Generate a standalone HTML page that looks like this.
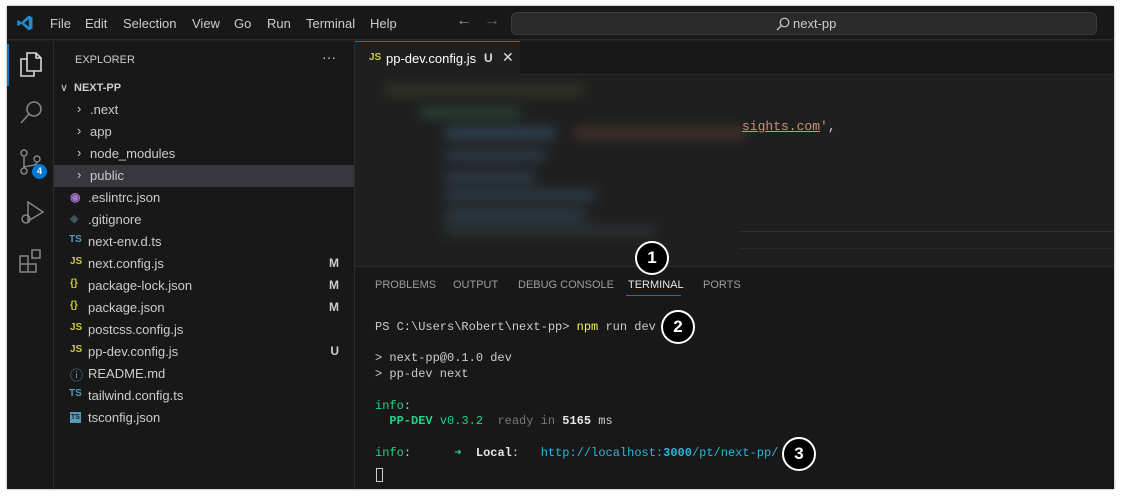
<!DOCTYPE html>
<html><head><meta charset="utf-8"><style>
*{margin:0;padding:0;box-sizing:border-box}
body{width:1121px;height:497px;background:#fff;position:relative;overflow:hidden;font-family:"Liberation Sans",sans-serif;font-size:13px;color:#ccc}
.win{position:absolute;left:7px;top:6px;width:1107px;height:483px;background:#1f1f1f;box-shadow:0 0 2px #888}
.abs{position:absolute}
.title{left:0;top:0;width:1107px;height:34px;background:#181818;border-bottom:1px solid #2b2b2b}
.menu span{position:absolute;top:10px;font-size:13px;color:#ccc}
.act{left:0;top:35px;width:47px;height:448px;background:#181818;border-right:1px solid #2b2b2b}
.side{left:47px;top:35px;width:301px;height:448px;background:#181818;border-right:1px solid #2b2b2b}
.row{position:absolute;left:0;width:300px;height:22px;font-size:13px;color:#ccc}
.row .t{position:absolute;left:34px;top:3px}
.row .ic{position:absolute;left:16px;top:3px;font-size:10px;font-weight:bold}
.row .m{position:absolute;right:15px;top:3px;color:#ccc;font-weight:bold;font-size:12px}
.mono{font-family:"Liberation Mono",monospace;font-size:12px}
.circ{position:absolute;width:34px;height:34px;border-radius:50%;background:#000;border:2.5px solid #fff;color:#fff;font-size:17px;text-align:center;line-height:29px;font-weight:bold}
</style></head><body>
<div class="win">
 <div class="abs title">
  <svg class="abs" style="left:9px;top:8px" width="18" height="18" viewBox="0 0 24 24"><path d="M17 2 L22 4.5 V19.5 L17 22 L7 13 L3 16 L1.5 15 V9 L3 8 L7 11 Z M17 7 L11 12 L17 17Z" fill="#2489ca"/></svg>
  <div class="menu"><span style="left:43px">File</span><span style="left:78px">Edit</span><span style="left:116px">Selection</span><span style="left:185px">View</span><span style="left:227px">Go</span><span style="left:260px">Run</span><span style="left:299px">Terminal</span><span style="left:363px">Help</span></div>
  <span class="abs" style="left:449px;top:6px;font-size:16px;color:#999">←</span><span class="abs" style="left:477px;top:6px;font-size:16px;color:#666">→</span>
  <div class="abs" style="left:504px;top:6px;width:586px;height:23px;background:#2a2a2a;border:1px solid #3c3c3c;border-radius:6px"></div>
  <svg class="abs" style="left:769px;top:11px" width="14" height="14" viewBox="0 0 14 14"><circle cx="8.5" cy="5.5" r="4.3" fill="none" stroke="#ccc" stroke-width="1.2"/><path d="M5.3 8.7 L1 13" stroke="#ccc" stroke-width="1.3"/></svg>
  <span class="abs" style="left:786px;top:10px;color:#ccc">next-pp</span>
 </div>
 <div class="abs act">
  <div class="abs" style="left:0;top:3px;width:2px;height:42px;background:#0078d4"></div>
  <svg class="abs" style="left:11px;top:10px" width="26" height="28" viewBox="0 0 26 28" fill="none" stroke="#d7d7d7" stroke-width="1.6"><path d="M9 2h9l5 5v13H9z M18 2v5h5"/><path d="M9 8H3v17h13v-5"/></svg>
  <svg class="abs" style="left:12px;top:58px" width="26" height="28" viewBox="0 0 26 28" fill="none" stroke="#858585" stroke-width="1.6"><circle cx="15" cy="10" r="7"/><path d="M10 15 L2 24"/></svg>
  <svg class="abs" style="left:12px;top:108px" width="26" height="28" viewBox="0 0 26 28" fill="none" stroke="#858585" stroke-width="1.5"><circle cx="5" cy="4" r="3"/><circle cx="5" cy="22" r="3"/><circle cx="18" cy="10" r="3"/><path d="M5 7v12 M18 13c0 5-13 3-13 6"/></svg>
  <div class="abs" style="left:25px;top:123px;width:15px;height:15px;border-radius:50%;background:#0078d4;color:#fff;font-size:9px;font-weight:bold;text-align:center;line-height:15px">4</div>
  <svg class="abs" style="left:11px;top:158px" width="28" height="28" viewBox="0 0 28 28" fill="none" stroke="#858585" stroke-width="1.5"><path d="M10 3 L25 13 L10 22 Z"/><circle cx="8" cy="20" r="4"/></svg>
  <svg class="abs" style="left:11px;top:207px" width="26" height="26" viewBox="0 0 26 26" fill="none" stroke="#858585" stroke-width="1.5"><path d="M2 8h8v8H2z M2 16h8v8H2z M10 16h8v8h-8z M14 2h8v8h-8z"/></svg>
 </div>
 <div class="abs side">
  <span class="abs" style="left:21px;top:13px;font-size:11px;color:#ccc">EXPLORER</span>
  <span class="abs" style="left:268px;top:8px;font-size:14px;color:#ccc">···</span>
  <div class="row" style="top:37px"><span class="abs" style="left:6px;top:3px;font-size:11px">∨</span><span class="abs" style="left:20px;top:4px;font-size:11px;font-weight:bold">NEXT-PP</span></div>
  <div class="row" style="top:58px"><span class="ic" style="left:23px;font-size:13px;font-weight:normal;top:2px">›</span><span class="t" style="left:36px">.next</span></div>
  <div class="row" style="top:80px"><span class="ic" style="left:23px;font-size:13px;font-weight:normal;top:2px">›</span><span class="t" style="left:36px">app</span></div>
  <div class="row" style="top:102px"><span class="ic" style="left:23px;font-size:13px;font-weight:normal;top:2px">›</span><span class="t" style="left:36px">node_modules</span></div>
  <div class="row" style="top:124px;background:#37373d"><span class="ic" style="left:23px;font-size:13px;font-weight:normal;top:2px">›</span><span class="t" style="left:36px">public</span></div>
  <div class="row" style="top:146px"><span class="ic" style="color:#a074c4;font-size:12px">◉</span><span class="t">.eslintrc.json</span></div>
  <div class="row" style="top:168px"><span class="ic" style="color:#41535b;font-size:11px">◆</span><span class="t">.gitignore</span></div>
  <div class="row" style="top:190px"><span class="ic" style="color:#519aba;left:15px">TS</span><span class="t">next-env.d.ts</span></div>
  <div class="row" style="top:212px"><span class="ic" style="color:#cbcb41">JS</span><span class="t">next.config.js</span><span class="m">M</span></div>
  <div class="row" style="top:234px"><span class="ic" style="color:#cbcb41">{}</span><span class="t">package-lock.json</span><span class="m">M</span></div>
  <div class="row" style="top:256px"><span class="ic" style="color:#cbcb41">{}</span><span class="t">package.json</span><span class="m">M</span></div>
  <div class="row" style="top:278px"><span class="ic" style="color:#cbcb41">JS</span><span class="t">postcss.config.js</span></div>
  <div class="row" style="top:300px"><span class="ic" style="color:#cbcb41">JS</span><span class="t">pp-dev.config.js</span><span class="m">U</span></div>
  <div class="row" style="top:322px"><span class="ic" style="color:#519aba;font-size:13px;font-weight:normal;top:2px">ⓘ</span><span class="t">README.md</span></div>
  <div class="row" style="top:344px"><span class="ic" style="color:#519aba;left:15px">TS</span><span class="t">tailwind.config.ts</span></div>
  <div class="row" style="top:366px"><span class="ic" style="background:#519aba;color:#1f1f1f;font-size:7px;width:11px;height:11px;top:5px;text-align:center;line-height:11px">TS</span><span class="t">tsconfig.json</span></div>
 </div>
 <!-- tabs -->
 <div class="abs" style="left:348px;top:35px;width:759px;height:34px;background:#181818;border-bottom:1px solid #2b2b2b"></div>
 <div class="abs" style="left:348px;top:35px;width:165px;height:35px;background:#1f1f1f;border-top:1px solid #0078d4">
  <span class="abs" style="left:14px;top:10px;font-size:10px;font-weight:bold;color:#cbcb41">JS</span>
  <span class="abs" style="left:31px;top:9px;color:#fff">pp-dev.config.js</span>
  <span class="abs" style="left:129px;top:9px;font-weight:bold;font-size:12px;color:#ddd">U</span>
  <span class="abs" style="left:147px;top:7px;font-size:14px;color:#ddd">✕</span>
 </div>
 <!-- blurred code -->
 <div class="abs" style="left:368px;top:74px;width:370px;height:160px;filter:blur(6px)">
  <div class="abs" style="left:10px;top:6px;width:200px;height:8px;background:#3c3a2a"></div>
  <div class="abs" style="left:45px;top:28px;width:100px;height:9px;background:#2c4a3a"></div>
  <div class="abs" style="left:70px;top:48px;width:110px;height:10px;background:#34495a"></div>
  <div class="abs" style="left:200px;top:48px;width:170px;height:10px;background:#4a3530"></div>
  <div class="abs" style="left:70px;top:70px;width:100px;height:10px;background:#30404e"></div>
  <div class="abs" style="left:70px;top:92px;width:90px;height:10px;background:#30404e"></div>
  <div class="abs" style="left:70px;top:110px;width:150px;height:10px;background:#30404e"></div>
  <div class="abs" style="left:70px;top:130px;width:140px;height:10px;background:#30404e"></div>
  <div class="abs" style="left:70px;top:146px;width:210px;height:8px;background:#2f3a3c"></div>
 </div>
 <span class="abs mono" style="left:735px;top:113px;color:#ce9178;font-size:13px"><u>sights.com</u>'<span style="color:#ccc">,</span></span>
 <div class="abs" style="left:732px;top:225px;width:375px;height:1px;background:#2e2e2e"></div>
 <div class="abs" style="left:732px;top:242px;width:375px;height:1px;background:#2a2a2a"></div>
 <!-- panel -->
 <div class="abs" style="left:348px;top:260px;width:759px;height:223px;background:#181818;border-top:1px solid #2b2b2b">
  <span class="abs" style="left:20px;top:12px;font-size:11px;color:#9d9d9d">PROBLEMS</span>
  <span class="abs" style="left:98px;top:12px;font-size:11px;color:#9d9d9d">OUTPUT</span>
  <span class="abs" style="left:163px;top:12px;font-size:11px;color:#9d9d9d">DEBUG CONSOLE</span>
  <span class="abs" style="left:273px;top:12px;font-size:11px;color:#e7e7e7">TERMINAL</span>
  <div class="abs" style="left:271px;top:28px;width:55px;height:1px;background:#0078d4"></div>
  <span class="abs" style="left:348px;top:12px;font-size:11px;color:#9d9d9d">PORTS</span>
  <div class="mono" style="position:absolute;left:20px;top:53px;line-height:15.7px;color:#ccc;white-space:pre">PS C:\Users\Robert\next-pp> <span style="color:#f5f543">npm</span> run dev

&gt; next-pp@0.1.0 dev
&gt; pp-dev next

<span style="color:#23d18b">info</span>:
  <span style="color:#23d18b;font-weight:bold">PP-DEV</span> <span style="color:#23d18b">v0.3.2</span>  <span style="color:#777">ready in</span> <b style="color:#e5e5e5">5165</b> <span style="color:#ccc">ms</span>

<span style="color:#23d18b">info</span>:      <span style="color:#23d18b">➜</span>  <b style="color:#e5e5e5">Local</b>:   <span style="color:#29b8db">http://localhost:<b>3000</b>/pt/next-pp/</span></div>
  <div class="abs" style="left:21px;top:201px;width:7px;height:14px;border:1px solid #ccc"></div>
 </div>
</div>
<div class="circ" style="left:635px;top:241px">1</div>
<div class="circ" style="left:661px;top:310px">2</div>
<div class="circ" style="left:782px;top:437px">3</div>
</body></html>
